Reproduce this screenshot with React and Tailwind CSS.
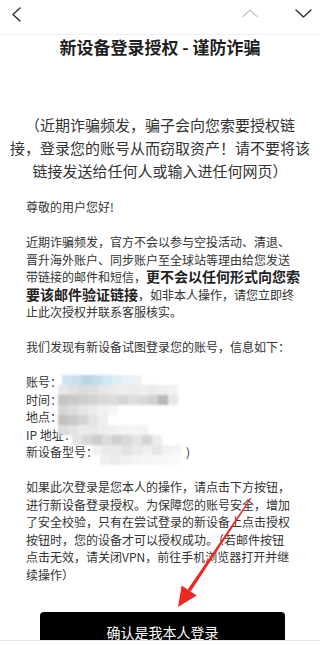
import React from 'react';

// mosaic over the redacted account info
const mosaic = [
    { top: 'top-[2px]', left: 'left-[36px]', cells: ['bg-[#cfe4f0]', 'bg-[#c6ddec]', 'bg-[#b9d5e6]', 'bg-[#c4dcea]', 'bg-[#d2e6f1]', 'bg-[#dfedf5]', 'bg-[#e9f2f8]', 'bg-[#f0f0f0]'] },
    { top: 'top-[12px]', left: 'left-[32px]', cells: ['bg-[#e8e8e8]', 'bg-[#e0e0e0]', 'bg-[#dadada]', 'bg-[#dedede]', 'bg-[#e6e6e6]', 'bg-[#eaeaea]', 'bg-[#eeeeee]', 'bg-[#ececec]', 'bg-[#efefef]', 'bg-[#eaeaea]', 'bg-[#ededed]', 'bg-[#f2f2f2]'] },
    { top: 'top-[22px]', left: 'left-[32px]', cells: ['bg-[#c4c4c4]', 'bg-[#c9c9c9]', 'bg-[#cecece]', 'bg-[#d3d3d3]', 'bg-[#d7d7d7]', 'bg-[#dcdcdc]', 'bg-[#d5d5d5]', 'bg-[#dedede]', 'bg-[#d9d9d9]', 'bg-[#d1d1d1]', 'bg-[#b8b8b8]', 'bg-[#e8e8e8]'] },
    { top: 'top-[32px]', left: 'left-[32px]', cells: ['bg-[#d6d6d6]', 'bg-[#dddddd]', 'bg-[#e6e6e6]', 'bg-[#ececec]', 'bg-[#f1f1f1]', 'bg-[#f5f5f5]'] },
    { top: 'top-[42px]', left: 'left-[32px]', cells: ['bg-[#c0c0c0]', 'bg-[#c8c8c8]', 'bg-[#d3d3d3]', 'bg-[#e4e4e4]', 'bg-[#efefef]'] },
    { top: 'top-[52px]', left: 'left-[32px]', cells: ['bg-[#dddddd]', 'bg-[#e2e2e2]', 'bg-[#ebebeb]', 'bg-[#e8e8e8]', 'bg-[#ededed]', 'bg-[#f0f0f0]', 'bg-[#f3f3f3]', 'bg-[#f5f5f5]', 'bg-[#f3f3f3]'] },
    { top: 'top-[62px]', left: 'left-[46px]', cells: ['bg-[#e3e3e3]', 'bg-[#d7d7d7]', 'bg-[#cdcdcd]', 'bg-[#dbdbdb]', 'bg-[#d0d0d0]', 'bg-[#d9d9d9]', 'bg-[#e4e4e4]', 'bg-[#d4d4d4]', 'bg-[#ececec]'] },
    { top: 'top-[72px]', left: 'left-[66px]', cells: ['bg-[#f1f1f1]', 'bg-[#e8e8e8]', 'bg-[#eaeaea]', 'bg-[#e1e1e1]', 'bg-[#e9e9e9]', 'bg-[#efefef]', 'bg-[#e5e5e5]', 'bg-[#f1f1f1]', 'bg-[#f5f5f5]'] },
    { top: 'top-[82px]', left: 'left-[74px]', cells: ['bg-[#efefef]', 'bg-[#ebebeb]', 'bg-[#f0f0f0]', 'bg-[#f3f3f3]', 'bg-[#f5f5f5]', 'bg-[#f7f7f7]', 'bg-[#f8f8f8]', 'bg-[#fafafa]'] },
];

const App = () => {
    return (
        <div className="relative flex h-[646px] w-[320px] flex-col overflow-hidden bg-white font-['Noto_Sans_CJK_SC',sans-serif]">
            {/* top bar */}
            <div className="flex h-[35px] shrink-0 items-start border-b border-[#f0f0f0] pt-[4px] pl-[6px] pr-[6px]">
                <svg width="20" height="20" viewBox="0 0 20 20" fill="none">
                    <path d="M14 4L7 10.5L14 17" stroke="#333" strokeWidth="1.5" strokeLinecap="round" strokeLinejoin="round" />
                </svg>
                <svg className="ml-auto" width="20" height="20" viewBox="0 0 20 20" fill="none">
                    <path d="M3 12.5L10 6L17 12.5" stroke="#c8c8c8" strokeWidth="1.4" strokeLinecap="round" strokeLinejoin="round" />
                </svg>
                <svg className="ml-[34px]" width="20" height="20" viewBox="0 0 20 20" fill="none">
                    <path d="M2 6L9.5 13L17 6" stroke="#333" strokeWidth="1.5" strokeLinecap="round" strokeLinejoin="round" />
                </svg>
            </div>

            <div className="min-h-0 flex-1 overflow-hidden">
                <h1 className="pt-[1px] text-center text-[17px] font-semibold leading-[21px] text-[#1f1f1f]">
                    新设备登录授权 - 谨防诈骗
                </h1>

                <p className="mt-[56px] text-center text-[15px] leading-[23px] text-[#333]">
                    （近期诈骗频发，骗子会向您索要授权链<br />
                    接，登录您的账号从而窃取资产！请不要将该<br />
                    链接发送给任何人或输入进任何网页）
                </p>

                <div className="mt-[16px] whitespace-nowrap px-[26px] text-[12px] leading-[17.5px] text-[#333]">
                    <p>尊敬的用户您好!</p>
                    <p className="mt-[17.5px]">
                        近期诈骗频发，官方不会以参与空投活动、清退、<br />
                        晋升海外账户、同步账户至全球站等理由给您发送<br />
                        带链接的邮件和短信，<span className="text-[14px] font-bold text-[#222]">更不会以任何形式向您索</span><br />
                        <span className="text-[14px] font-bold text-[#222]">要该邮件验证链接</span>，如非本人操作，请您立即终<br />
                        止此次授权并联系客服核实。
                    </p>
                    <p className="mt-[17.5px]">我们发现有新设备试图登录您的账号，信息如下：</p>

                    <div className="relative mt-[17.5px]">
                        <p>账号：</p>
                        <p>时间：</p>
                        <p>地点：</p>
                        <p>IP 地址：</p>
                        <p>新设备型号：<span className="inline-block w-[88px]"></span>)</p>

                        <div className="absolute inset-0 blur-[1px]">
                            {mosaic.map((row, i) => (
                                <div key={i} className={`absolute flex ${row.top} ${row.left}`}>
                                    {row.cells.map((c, j) => (
                                        <div key={j} className={`h-[10px] w-[10px] ${c}`} />
                                    ))}
                                </div>
                            ))}
                        </div>
                    </div>

                    <p className="mt-[17.5px]">
                        如果此次登录是您本人的操作，请点击下方按钮，<br />
                        进行新设备登录授权。为保障您的账号安全，增加<br />
                        了安全校验，只有在尝试登录的新设备上点击授权<br />
                        按钮时，您的设备才可以授权成功。（若邮件按钮<br />
                        点击无效，请关闭VPN，前往手机浏览器打开并继<br />
                        续操作）
                    </p>
                </div>

                <div className="ml-[40px] mt-[29px] h-[44px] w-[245px] rounded-t-[4px] bg-black pt-[10px] text-center text-[14px] leading-[20px] text-white">
                    确认是我本人登录
                </div>
            </div>

            {/* bottom strip */}
            <div className="h-[6px] shrink-0 border-t border-[#e8e8e8] bg-white" />

            {/* red annotation arrow */}
            <svg className="pointer-events-none absolute left-0 top-0" width="320" height="646" viewBox="0 0 320 646">
                <polygon points="250.5,497.7 251.5,498.3 190.7,591.4 187.7,589.4" fill="#ec2a24" />
                <polygon points="178,607 181.7,585.4 196.7,595.4" fill="#ec2a24" />
            </svg>
        </div>
    );
};

export default App;
